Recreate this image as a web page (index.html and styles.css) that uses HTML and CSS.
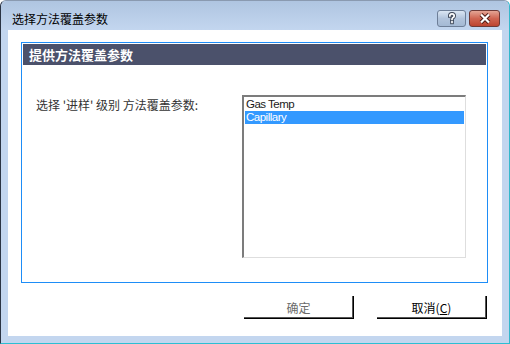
FILE: index.html
```html
<!DOCTYPE html>
<html>
<head>
<meta charset="utf-8">
<link rel="stylesheet" href="styles.css">
</head>
<body>
<div class="window">
  <div class="titlebar">
    <span class="title">选择方法覆盖参数</span>
    <div class="caption-buttons">
      <span class="cbtn help">
        <svg width="12" height="13" viewBox="0 0 12 13">
          <g fill="none" stroke-linecap="square">
            <path d="M3.8 4 Q3.8 1.8 6 1.8 Q8.2 1.8 8.2 3.9 Q8.2 5.1 6.8 5.8 Q6 6.2 6 7.4" stroke="#3d4657" stroke-width="3.6"/>
            <path d="M6 9.8 V10.4" stroke="#3d4657" stroke-width="3.6"/>
            <path d="M3.8 4 Q3.8 1.8 6 1.8 Q8.2 1.8 8.2 3.9 Q8.2 5.1 6.8 5.8 Q6 6.2 6 7.4" stroke="#fff" stroke-width="1.7"/>
            <path d="M6 9.8 V10.4" stroke="#fff" stroke-width="1.7"/>
          </g>
        </svg>
      </span>
      <span class="cbtn close">
        <svg width="14" height="11" viewBox="0 0 14 11">
          <g stroke-linecap="butt">
            <path d="M3 1.5 L11 9.5 M11 1.5 L3 9.5" stroke="#4a1a15" stroke-width="4"/>
            <path d="M3 1.5 L11 9.5 M11 1.5 L3 9.5" stroke="#fff" stroke-width="2.2"/>
          </g>
        </svg>
      </span>
    </div>
  </div>
  <div class="client">
    <div class="group">
      <div class="group-header">提供方法覆盖参数</div>
      <div class="group-body">
        <div class="label">选择 '进样' 级别 方法覆盖参数:</div>
        <div class="listbox">
          <div class="item">Gas Temp</div>
          <div class="item selected">Capillary</div>
        </div>
      </div>
    </div>
    <div class="buttons">
      <button class="btn disabled">确定</button>
      <button class="btn">取消(<u>C</u>)</button>
    </div>
  </div>
</div>
</body>
</html>
```

FILE: styles.css
```css
* { box-sizing: border-box; }
html, body { margin: 0; padding: 0; background: #fff; }
body { width: 510px; height: 344px; overflow: hidden; }

.window {
  width: 510px;
  height: 344px;
  background: #c3d6ef;
  border-left: 1px solid #2b3444;
  border-right: 1px solid #34b8cc;
  border-bottom: 1px solid #2cbfd3;
  border-top: 1px solid #8a9ab0;
  border-radius: 6px 6px 0 0;
  font-family: "Noto Sans CJK SC", sans-serif;
}

.titlebar {
  height: 29px;
  display: flex;
  align-items: flex-start;
  padding-left: 11px;
  background: linear-gradient(#afc5e1, #c3d6ef);
  border-radius: 6px 6px 0 0;
}
.title {
  font-size: 12px;
  line-height: 16px;
  padding-top: 10px;
  color: #000;
}
.caption-buttons {
  margin-left: auto;
  margin-right: 9px;
  margin-top: 9px;
  display: flex;
  gap: 3px;
}
.cbtn {
  height: 17px;
  display: flex;
  align-items: center;
  justify-content: center;
  border-radius: 3px;
}
.help {
  width: 29px;
  border: 1px solid #6e7f98;
  background: linear-gradient(#dbe6f3, #b2c4dc 50%, #a4b9d4);
}
.close {
  width: 31px;
  border: 1px solid #6e3a37;
  background: linear-gradient(#e4a595, #cf6552 50%, #bd4430);
}

.client {
  margin-left: 7px;
  width: 494px;
  height: 306px;
  background: #fff;
  padding-top: 12px;
}

.group {
  margin-left: 13px;
  width: 467px;
  height: 241px;
  border: 1px solid #1e8df7;
  padding: 1px;
}
.group-header {
  height: 21px;
  background: #4b516b;
  color: #fff;
  font-weight: bold;
  font-size: 13px;
  line-height: 21px;
  padding-left: 6px;
}
.group-body {
  display: flex;
  padding-left: 13px;
}
.label {
  width: 206px;
  margin-top: 32px;
  font-size: 12px;
  line-height: 16px;
  color: #333;
}
.listbox {
  margin-top: 30px;
  width: 224px;
  height: 163px;
  border-top: 2px solid #7c7c7c;
  border-left: 2px solid #7c7c7c;
  border-right: 1px solid #dedede;
  border-bottom: 1px solid #dedede;
  padding: 1px;
  background: #fff;
}
.item {
  height: 13px;
  line-height: 13px;
  font-family: "Liberation Sans", Arial, sans-serif;
  font-size: 11.5px;
  letter-spacing: -0.5px;
  padding-left: 1px;
  color: #1a1a1a;
}
.item.selected {
  background: #3399ff;
  color: #fff;
}

.buttons {
  display: flex;
  justify-content: flex-end;
  gap: 23px;
  padding-right: 15px;
  margin-top: 13px;
}
.btn {
  width: 110px;
  height: 23px;
  padding: 0;
  background: #fff;
  border: none;
  border-right: 1px solid #000;
  border-bottom: 1px solid #000;
  box-shadow: inset -1px -1px 0 #555;
  font-family: "Noto Sans CJK SC", sans-serif;
  font-size: 12px;
  color: #000;
}
.btn.disabled { color: #6b6b6b; }
```
